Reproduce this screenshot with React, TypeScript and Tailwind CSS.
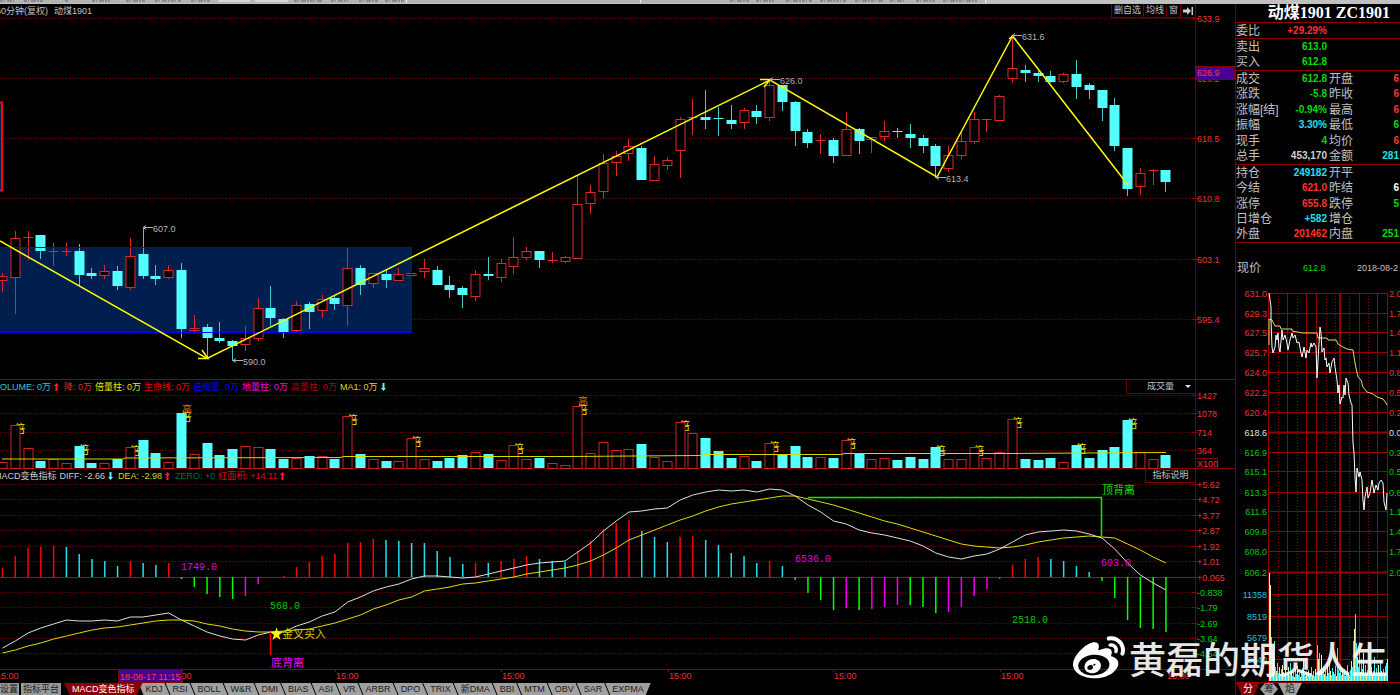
import React from 'react';
import { FaWeibo } from 'react-icons/fa';

type Candle = ['r' | 'c', number, number, number, number];
type Bar = [string, number];

// direction, high, body top, body bottom, low
const CANDLES: Candle[] = [
  ['r', 273, 276, 280, 292], ['r', 231, 238, 277, 314], ['r', 231, 237, 237, 260], ['c', 235, 235, 251, 259],
  ['r', 243, 251, 251, 266], ['r', 243, 251, 251, 256], ['c', 244, 251, 275, 287], ['c', 268, 273, 276, 279],
  ['r', 265, 271, 275, 279], ['c', 266, 271, 286, 290], ['r', 238, 256, 287, 290], ['c', 227, 254, 276, 279],
  ['c', 265, 276, 279, 285], ['r', 265, 270, 277, 279], ['c', 263, 270, 329, 338], ['r', 315, 328, 330, 334],
  ['c', 324, 327, 338, 358], ['c', 322, 338, 341, 343], ['c', 340, 341, 346, 361], ['r', 326, 338, 344, 351],
  ['r', 298, 308, 338, 341], ['c', 286, 308, 318, 326], ['c', 318, 319, 332, 338], ['r', 301, 305, 330, 333],
  ['c', 302, 304, 312, 329], ['r', 295, 299, 310, 318], ['c', 296, 298, 304, 310], ['r', 248, 268, 305, 326],
  ['c', 265, 268, 285, 295], ['r', 273, 273, 283, 288], ['c', 269, 274, 280, 288], ['r', 268, 274, 280, 280],
  ['r', 273, 273, 275, 275], ['r', 259, 268, 271, 278], ['c', 266, 270, 285, 285], ['c', 276, 285, 290, 298],
  ['c', 286, 288, 295, 308], ['r', 270, 274, 296, 301], ['c', 257, 274, 276, 280], ['r', 259, 263, 277, 282],
  ['r', 237, 257, 266, 274], ['r', 247, 251, 257, 260], ['c', 251, 251, 260, 268], ['r', 252, 260, 260, 263],
  ['r', 256, 257, 261, 263], ['r', 175, 204, 258, 259], ['r', 185, 192, 203, 214], ['r', 154, 163, 191, 198],
  ['r', 151, 156, 162, 176], ['r', 139, 146, 153, 161], ['c', 146, 148, 180, 180], ['r', 156, 164, 180, 180],
  ['r', 157, 160, 165, 170], ['r', 117, 119, 150, 178], ['r', 99, 117, 117, 135], ['c', 90, 117, 120, 129],
  ['c', 107, 118, 119, 136], ['c', 105, 120, 124, 129], ['r', 108, 110, 122, 129], ['c', 105, 111, 117, 124],
  ['r', 80, 85, 117, 121], ['c', 85, 85, 102, 111], ['c', 101, 102, 131, 146], ['c', 129, 132, 143, 148],
  ['r', 134, 140, 140, 154], ['c', 138, 140, 156, 163], ['r', 112, 129, 155, 155], ['c', 128, 129, 141, 154],
  ['r', 137, 137, 139, 153], ['r', 121, 131, 136, 141], ['c', 128, 131, 132, 138], ['c', 124, 134, 138, 148],
  ['c', 135, 138, 146, 153], ['c', 144, 146, 166, 178], ['r', 146, 155, 168, 172], ['r', 130, 141, 155, 159],
  ['r', 112, 119, 141, 144], ['r', 119, 119, 119, 132], ['r', 95, 96, 120, 120], ['r', 35, 68, 78, 83],
  ['c', 65, 70, 73, 82], ['c', 71, 73, 76, 82], ['c', 71, 76, 82, 83], ['r', 73, 74, 81, 83],
  ['c', 60, 74, 87, 99], ['c', 83, 85, 90, 99], ['c', 90, 90, 108, 121], ['c', 98, 105, 146, 151],
  ['c', 148, 148, 189, 196], ['r', 168, 173, 186, 195], ['r', 169, 170, 170, 185], ['c', 170, 170, 182, 192],
];

const VOLUMES = [
  462, 425, 448, 461, 459, 463, 446, 463, 463, 459, 447, 440, 453, 462, 413, 454, 443, 455, 449, 446, 447, 449, 459,
  458, 456, 456, 459, 416, 454, 459, 461, 461, 438, 459, 461, 458, 455, 452, 454, 460, 445, 459, 458, 463, 465, 406,
  453, 442, 450, 449, 444, 457, 461, 422, 433, 438, 451, 458, 456, 461, 443, 454, 446, 457, 457, 458, 440, 453, 459,
  458, 460, 457, 459, 447, 459, 459, 447, 458, 452, 419, 459, 460, 458, 462, 445, 458, 450, 447, 420, 452, 459, 455,
];

const DOUBLED = [1, 6, 10, 14, 27, 32, 40, 45, 53, 60, 66, 73, 76, 79, 84, 88];

const MACD: Bar[] = [
  ['r', 568], ['r', 556], ['r', 548], ['r', 547], ['r', 546], ['c', 547], ['c', 554], ['c', 559], ['c', 561], ['c', 566],
  ['r', 561], ['c', 563], ['c', 565], ['r', 563], ['g', 579], ['g', 587], ['g', 594], ['g', 597], ['g', 599], ['m', 596],
  ['m', 584], ['g', 577], ['r', 576], ['r', 567], ['r', 562], ['r', 556], ['r', 554], ['r', 543], ['r', 542], ['r', 539],
  ['c', 540], ['c', 541], ['c', 543], ['c', 543], ['c', 551], ['c', 557], ['c', 564], ['r', 563], ['c', 563], ['r', 561],
  ['r', 559], ['r', 556], ['c', 559], ['c', 561], ['c', 562], ['r', 551], ['r', 541], ['r', 529], ['r', 523], ['r', 520],
  ['c', 531], ['c', 537], ['c', 542], ['r', 537], ['r', 536], ['c', 540], ['c', 545], ['c', 553], ['c', 556], ['c', 563],
  ['r', 561], ['c', 566], ['g', 580], ['g', 593], ['g', 600], ['g', 610], ['m', 608], ['g', 610], ['m', 609], ['m', 607],
  ['m', 605], ['g', 605], ['g', 607], ['g', 613], ['m', 612], ['m', 607], ['m', 596], ['m', 589], ['m', 579], ['r', 565],
  ['r', 559], ['r', 557], ['c', 559], ['c', 561], ['c', 566], ['c', 572], ['g', 581], ['g', 598], ['g', 620], ['g', 628],
  ['g', 629], ['g', 632],
];

const DIFF = [
  648, 641, 633, 628, 624, 620, 621, 621, 620, 621, 617, 617, 615, 613, 620, 626, 632, 636, 639, 640, 635, 632, 632,
  626, 622, 616, 612, 602, 597, 591, 587, 584, 579, 576, 576, 577, 578, 577, 574, 571, 568, 565, 563, 562, 561, 552,
  543, 531, 521, 512, 511, 509, 508, 500, 495, 492, 490, 491, 490, 492, 489, 490, 496, 505, 512, 521, 524, 530, 533,
  535, 538, 541, 546, 553, 557, 559, 556, 554, 549, 542, 535, 532, 531, 530, 531, 534, 538, 549, 563, 575, 583, 590,
];

const DEA = [
  653, 650, 646, 643, 639, 636, 633, 630, 628, 627, 625, 623, 621, 620, 620, 621, 624, 626, 629, 631, 632, 632, 631,
  630, 629, 626, 623, 619, 615, 609, 605, 600, 597, 591, 589, 587, 584, 583, 581, 579, 577, 574, 572, 570, 568, 565,
  561, 555, 548, 540, 535, 530, 525, 520, 516, 511, 507, 504, 502, 500, 498, 496, 496, 499, 502, 505, 509, 513, 517,
  521, 524, 528, 532, 536, 540, 544, 546, 547, 548, 547, 545, 542, 540, 538, 537, 536, 537, 538, 544, 550, 557, 563,
];

const PRICE_AXIS: [number, string][] = [[18, '633.9'], [78, '626.2'], [138, '618.5'], [198, '610.8'], [259, '603.1'], [319, '595.4']];
const VOLUME_AXIS: [number, string][] = [[395, '1427'], [413, '1078'], [432, '714'], [450, '364']];
const MACD_AXIS: [number, string][] = [
  [484, '+5.62'], [499, '+4.72'], [515, '+3.77'], [530, '+2.87'], [546, '+1.92'], [561, '+1.01'], [577, '+0.065'],
  [592, '-0.838'], [607, '-1.79'], [623, '-2.69'], [638, '-3.64'], [653, '-4.54'],
];

const COLORS: Record<string, string> = { r: '#ff0000', c: '#22e0ee', g: '#00ff00', m: '#ee00ee' };

const xAt = (i: number) => 2.5 + i * 12.785;
const linePoints = (values: number[]) => values.map((y, i) => `${xAt(i)},${y}`).join(' ');

const Grid: React.FC<{ axis: [number, string][]; top: number; bottom: number }> = ({ axis, top, bottom }) => (
  <>
    {axis.map(([y, label]) => (
      <g key={label}>
        <line x1="0" x2="1195" y1={y + 0.5} y2={y + 0.5} stroke="#7a0000" strokeDasharray="1 1.5" />
        <line x1="1192" x2="1198" y1={y + 0.5} y2={y + 0.5} stroke="#8b0000" />
        <text x="1197" y={y + 4} fontSize="9" fill={label.startsWith('-') ? '#00d000' : '#f03434'}>{label}</text>
      </g>
    ))}
    <line x1="1195.5" x2="1195.5" y1={top} y2={bottom} stroke="#700000" />
  </>
);

const CallOut: React.FC<{ x: number; y: number; label: string }> = ({ x, y, label }) => (
  <g stroke="#b0b0b0" fill="none">
    <path d={`M${x + 10} ${y}H${x}M${x + 3} ${y - 2}L${x} ${y}L${x + 3} ${y + 2}`} />
    <text x={x + 10} y={y + 4} fontSize="9" fill="#b4b4b4" stroke="none">{label}</text>
  </g>
);

const PriceChart: React.FC = () => (
  <svg viewBox="0 18 1235 361" className="block w-full h-auto overflow-visible" role="img" aria-label="动煤1901">
    <Grid axis={PRICE_AXIS} top={18} bottom={379} />
    <rect x="-5" y="247" width="417" height="86" fill="#001f4f" />
    <rect x="-5" y="102.5" width="7" height="88" fill="#001f4f" stroke="#ff0000" strokeWidth="2" />
    {CANDLES.map(([dir, high, top, bottom, low], i) => {
      const x = Math.round(xAt(i) - 0.5) + 0.5;
      if (dir === 'c') {
        return (
          <g key={i}>
            <line x1={x} x2={x} y1={high} y2={low} stroke="#46c8c8" />
            <rect x={x - 5} y={top} width="10" height={bottom - top} fill="#54ffff" />
          </g>
        );
      }
      return (
        <g key={i} stroke="#dc2828">
          <line x1={x} x2={x} y1={high} y2={top} />
          <line x1={x} x2={x} y1={bottom} y2={low} />
          {top === bottom
            ? <line x1={x - 5} x2={x + 5} y1={top + 0.5} y2={top + 0.5} />
            : <rect x={x - 4.5} y={top + 0.5} width="9" height={bottom - top} fill="#000" />}
        </g>
      );
    })}
    <rect x="-5" y="247.5" width="416.5" height="85" fill="none" stroke="#0000ff" />
    <g fill="none" stroke="#ffff00" strokeWidth="1.5">
      <path d="M0 241L207 358.5L770 80L937 177L1012.5 36L1128 185" />
      <path d="M198 358.5H208L202 350M760 79.500H770L764 87M1009 39L1012.500 36L1016 40" />
    </g>
    <CallOut x={143} y={227.5} label="607.0" />
    <CallOut x={233} y={360.5} label="590.0" />
    <CallOut x={770} y={79.5} label="626.0" />
    <CallOut x={936} y={177.5} label="613.4" />
    <CallOut x={1012} y={35.5} label="631.6" />
    <rect x="1195.5" y="66.5" width="39" height="13" fill="#480090" stroke="#800000" />
    <text x="1197" y="76" fontSize="9" fill="#ff3c50">626.9</text>
  </svg>
);

const VolumeChart: React.FC = () => (
  <svg viewBox="0 394 1235 74" className="block w-full h-auto overflow-visible" role="img" aria-label="成交量">
    <Grid axis={VOLUME_AXIS} top={394} bottom={468} />
    {DOUBLED.map((i) => (
      <text key={i} x={xAt(i) - 1} y={VOLUMES[i] + 8} fontSize="11" fill="#e8e800">倍</text>
    ))}
    <text x="182" y="413" fontSize="10" fill="#e07000">高</text>
    <text x="578" y="405" fontSize="10" fill="#e07000">高</text>
    {VOLUMES.map((y, i) => {
      const x = Math.round(xAt(i) - 0.5) + 0.5;
      return CANDLES[i][0] === 'c'
        ? <rect key={i} x={x - 5} y={y} width="10" height={468 - y} fill="#54ffff" />
        : <rect key={i} x={x - 4.5} y={y + 0.5} width="9" height={468 - y} fill="#000" stroke="#c82424" />;
    })}
    <polyline
      points="2,459 123,459 125,458 340,457.500 344,456.500 570,456.500 700,455.500 705,454.500 840,454.500 845,453.500 1005,453.500 1166,452.500"
      fill="none" stroke="#d8d800"
    />
    <rect x="1195.5" y="458.5" width="22" height="10" fill="none" stroke="#800000" />
    <text x="1197" y="467" fontSize="9" fill="#f03434">X100</text>
  </svg>
);

const MacdChart: React.FC = () => (
  <svg viewBox="0 483 1235 186" className="block w-full h-auto overflow-visible" role="img" aria-label="MACD变色指标">
    <Grid axis={MACD_AXIS} top={483} bottom={669} />
    <line x1="0" x2="1195" y1="577.500" y2="577.500" stroke="#005a32" />
    {MACD.map(([c, y], i) => (
      <line key={i} x1={xAt(i)} x2={xAt(i)} y1="577" y2={y} stroke={COLORS[c]} strokeWidth="1.5" />
    ))}
    <polyline points={linePoints(DEA)} fill="none" stroke="#e0e000" />
    <polyline points={linePoints(DIFF)} fill="none" stroke="#e0e0e0" />
    <path d="M808 497.500H1101.500V536" fill="none" stroke="#00f000" strokeWidth="1.5" />
    <text x="1102" y="494" fontSize="11" fill="#00e000">顶背离</text>
    <g className="font-['Liberation_Mono',monospace]" fontSize="10">
      <text x="181" y="570" fill="#e000e0">1749.0</text>
      <text x="270" y="609" fill="#00c800">568.0</text>
      <text x="795" y="562" fill="#e000e0">6536.0</text>
      <text x="1101" y="566" fill="#e000e0">603.0</text>
      <text x="1012" y="623" fill="#00c800">2518.0</text>
    </g>
    <line x1="270.500" x2="270.500" y1="632" y2="655" stroke="#ff0000" strokeWidth="1.5" />
    <path d="M276.500 627.500L278 632H282.500L279 635L280.500 640L276.500 637L272.500 640L274 635L270.500 632H275Z" fill="#ffff00" />
    <text x="282" y="638" fontSize="11" fill="#d0d000">金叉买入</text>
    <text x="271" y="667" fontSize="11" fill="#f000f0">底背离</text>
  </svg>
);

const TIMES = [-4, 169, 336, 502, 669, 834, 1001, 1167];

const TimeAxis: React.FC = () => (
  <svg viewBox="0 669 1235 14" className="block w-full h-auto" role="img" aria-label="时间">
    <line x1="0" x2="1235" y1="669.500" y2="669.500" stroke="#8b0000" />
    {TIMES.map((x) => (
      <g key={x}>
        <line x1={x - 0.5} x2={x - 0.5} y1="669" y2="672" stroke="#8b0000" />
        <text x={x} y="679" fontSize="9" fill="#f03030">15:00</text>
      </g>
    ))}
    <rect x="118.500" y="669.500" width="64" height="13" fill="#480090" stroke="#800000" />
    <text x="120" y="680" fontSize="9" fill="#ff3c50">18-08-17 11:15</text>
  </svg>
);

const Arrow: React.FC<{ up?: boolean }> = ({ up }) => (
  <svg viewBox="0 0 5 8" className={up ? 'w-[5px] h-2 fill-[#ff2020]' : 'w-[5px] h-2 fill-[#54ffff] rotate-180'} aria-hidden="true">
    <path d="M2.500 0L5 3H3.500V8H1.500V3H0Z" />
  </svg>
);

const INDICATORS = [
  'KDJ', 'RSI', 'BOLL', 'W&R', 'DMI', 'BIAS', 'ASI', 'VR', 'ARBR', 'DPO', 'TRIX', '新DMA', 'BBI', 'MTM', 'OBV', 'SAR', 'EXPMA',
];

interface QuoteRow {
  tall?: boolean;
  line?: boolean;
  cells: [string, string, string, string?, string?, string?];
}

const RED = 'text-[#ff3232]';
const GREEN = 'text-[#00dc00]';
const CYAN = 'text-[#20e0f0]';

const QUOTES: QuoteRow[] = [
  { tall: true, line: true, cells: ['委比', '+29.29%', RED] },
  { tall: true, line: true, cells: ['卖出', '613.0', GREEN] },
  { tall: true, cells: ['买入', '612.8', GREEN] },
  { tall: true, line: true, cells: ['成交', '612.8', GREEN, '开盘', '6', RED] },
  { cells: ['涨跌', '-5.8', GREEN, '昨收', '6', RED] },
  { tall: true, cells: ['涨幅[结]', '-0.94%', GREEN, '最高', '6', RED] },
  { cells: ['振幅', '3.30%', CYAN, '最低', '6', GREEN] },
  { tall: true, cells: ['现手', '4', GREEN, '均价', '6', RED] },
  { tall: true, cells: ['总手', '453,170', 'text-[#d0d0d0]', '金额', '281', CYAN] },
  { tall: true, line: true, cells: ['持仓', '249182', CYAN, '开平', '', RED] },
  { cells: ['今结', '621.0', RED, '昨结', '6', 'text-white'] },
  { tall: true, cells: ['涨停', '655.8', RED, '跌停', '5', GREEN] },
  { cells: ['日增仓', '+582', CYAN, '增仓', '', RED] },
  { tall: true, cells: ['外盘', '201462', RED, '内盘', '251', GREEN] },
];

const QuoteTable: React.FC = () => (
  <table className="w-full table-fixed border-collapse border-b border-[#8b0000] leading-none whitespace-nowrap">
    <colgroup>
      <col className="w-[43px]" />
      <col className="w-[48px]" />
      <col className="w-[26px]" />
      <col />
    </colgroup>
    <tbody>
      {QUOTES.map(({ tall, line, cells }) => (
        <tr key={cells[0]} className={`${tall ? 'h-4' : 'h-[15px]'} ${line ? 'border-t border-[#8b0000]' : ''}`}>
          <th scope="row" className="p-0 text-left text-[12px] font-normal text-[#c0c0c0]">{cells[0]}</th>
          <td className={`p-0 text-right text-[10px] font-bold ${cells[2]}`}>{cells[1]}</td>
          <td className="p-0 pl-0.5 text-[12px] text-[#c0c0c0]">{cells[3]}</td>
          <td className={`p-0 pr-px text-right text-[10px] font-bold ${cells[5]}`}>{cells[4]}</td>
        </tr>
      ))}
    </tbody>
  </table>
);

const DAY_LEVELS: [number, string, string][] = [
  [293, '631.0', '2.0'], [313, '629.3', '1.7'], [332, '627.5', '1.4'], [352, '625.7', '1.1'], [372, '624.0', '0.8'],
  [392, '622.2', '0.5'], [412, '620.4', '0.2'], [432, '618.6', '0.0'], [452, '616.9', '0.2'], [471, '615.1', '0.5'],
  [492, '613.3', '0.8'], [511, '611.6', '1.1'], [531, '609.8', '1.4'], [551, '608.0', '1.7'], [572, '606.2', '2.0'],
];

const DAY_VOLUME: [number, string][] = [[594, '11358'], [616, '8519'], [637, '5679'], [659, '2840']];

// traded volume per slot, one pixel wide each
const TICKS = [
  108, 96, 44, 30, 22, 40, 14, 10, 18, 8, 14, 6, 12, 16, 9, 6, 11, 5, 8, 14, 6, 18, 10, 5, 9, 4, 12, 7, 15, 6, 8, 4, 10, 13,
  20, 7, 5, 9, 6, 11, 4, 8, 14, 6, 10, 5, 12, 7, 36, 22, 28, 12, 26, 9, 15, 7, 11, 5, 18, 8, 24, 10, 6, 13, 9, 7, 15, 5, 33,
  11, 8, 14, 6, 10, 7, 12, 5, 9, 16, 8, 6, 11, 20, 14, 40, 52, 67, 38, 24, 14, 33, 9, 22, 12, 28, 8, 16, 7, 11, 5, 20, 9, 14,
  6, 10, 24, 7, 13, 5, 16, 8, 20, 10, 6, 12, 8, 15, 18, 22,
];

const DayChart: React.FC = () => (
  <svg viewBox="1236 276 164 407" className="block w-full h-auto" role="img" aria-label="分时走势">
    <g fill="none" stroke="#960000">
      {[1268.5, 1287.5, 1306.5, 1316.5, 1359.5, 1377.5, 1387.5].map((x) => <line key={x} x1={x} x2={x} y1="293" y2="681" />)}
      <line x1="1340" x2="1340" y1="293" y2="681" strokeWidth="2" />
      {[1278.5, 1297.5, 1326.5, 1335.5, 1349.5, 1368.5].map((x) => (
        <line key={x} x1={x} x2={x} y1="293" y2="681" strokeDasharray="1 2" />
      ))}
      {DAY_LEVELS.map(([y]) => (
        <line key={y} x1="1268" x2="1388" y1={y + 0.5} y2={y + 0.5} strokeWidth={y === 432 || y === 572 ? 2 : 1} />
      ))}
      {DAY_VOLUME.map(([y]) => <line key={y} x1="1268" x2="1388" y1={y + 0.5} y2={y + 0.5} />)}
      <line x1="1235" x2="1400" y1="682.500" y2="682.500" />
    </g>
    <g fontSize="9">
      {DAY_LEVELS.map(([y, price, pct]) => {
        const fill = y === 432 ? '#e0e0e0' : y < 432 ? '#f03030' : '#00c800';
        return (
          <g key={y} fill={fill}>
            <text x="1267" y={y + 4} textAnchor="end">{price}</text>
            <text x="1389" y={y + 4}>{pct}</text>
          </g>
        );
      })}
      {DAY_VOLUME.map(([y, label]) => (
        <text key={y} x="1267" y={y + 4} textAnchor="end" fill="#18c8d8">{label}</text>
      ))}
    </g>
    {TICKS.map((h, i) => (
      <rect key={i} x={1269 + i} y={681 - h} width="1" height={h} fill={i < 2 || i % 3 === 1 ? '#f0f0a0' : '#40e8f0'} />
    ))}
    <polyline
      points="1269,345 1269,319 1272,320 1275,326 1280,326 1281,329 1292,329 1292,331 1303,333 1317,333 1318,338 1327,338 1328,340 1336,340 1338,344 1343,347 1347,349 1353,350 1354,357 1356,368 1358,377 1361,380 1363,387 1367,392 1373,394 1377,397 1383,399 1386,403 1387,405"
      fill="none" stroke="#dcdc64"
    />
    <polyline
      points="1269,293 1271,307 1271,320 1272,347 1273,353 1275,347 1276,335 1277,340 1278,333 1279,348 1280,352 1282,330 1283,340 1285,335 1287,343 1288,350 1290,340 1292,333 1293,338 1295,335 1297,343 1299,342 1301,353 1302,357 1304,347 1306,358 1307,350 1309,353 1311,343 1312,347 1314,343 1316,347 1317,378 1319,343 1320,327 1321,333 1322,352 1324,348 1325,360 1326,358 1327,367 1329,363 1330,373 1332,362 1334,358 1335,367 1337,380 1338,393 1339,385 1340,404 1342,397 1343,398 1344,385 1345,395 1346,378 1348,383 1349,395 1351,403 1352,405 1353,443 1354,453 1355,477 1356,492 1357,468 1359,477 1360,472 1362,480 1363,500 1364,510 1365,497 1367,487 1368,498 1370,493 1372,480 1374,493 1376,485 1378,490 1379,483 1381,480 1383,483 1384,502 1386,510 1387,493"
      fill="none" stroke="#ffffff"
    />
  </svg>
);

const Toolbar: React.FC = () => (
  <div className="h-1 overflow-hidden bg-[#c0c0c0]">
    <svg viewBox="0 0 1400 4" className="block w-full h-auto" aria-hidden="true">
      <rect width="985" height="3" fill="#b4b4b4" />
      <path d="M218 1h32M255 1h33" stroke="#d8d8d8" strokeWidth="2" />
      <path
        d="M0 1h14M24 1h20M65 1h3M92 1h18M126 1h19M155 1h26M191 1h19M294 1h28M331 1h17M359 1h19M385 1h19M730 1h20M756 1h18M786 1h26M820 1h26M855 1h28M890 1h14M916 1h20M943 1h34"
        stroke="#606060" strokeDasharray="3 1 1 2 5 1 2 1"
      />
      <path d="M406.500 0V3M640.500 0V3M985.500 0V3" stroke="#f0f0f0" />
    </svg>
  </div>
);

const App: React.FC = () => {
  return (
    <div className="relative min-h-screen overflow-hidden bg-black font-['Liberation_Sans','Noto_Sans_CJK_SC',sans-serif] text-[#c0c0c0]">
      <Toolbar />

      <div className="flex">
        {/* Charts */}
        <main className="min-w-0 flex-1 text-[9px] leading-none whitespace-nowrap">
          <header className="flex h-[14px]">
            <div className="flex flex-1 items-center gap-1.5">
              <h1 className="-ml-1">60分钟(复权)</h1>
              <span>动煤1901</span>
            </div>
            <div className="flex border-b border-l border-[#700000] divide-x divide-[#700000]">
              <button type="button" className="px-0.5">删自选</button>
              <button type="button" className="px-0.5">均线</button>
              <button type="button" className="px-0.5">窗</button>
              <button type="button" aria-label="最新" className="px-0.5">
                <svg viewBox="0 0 10 8" className="block w-[10px] h-2 fill-[#d0d0d0]" aria-hidden="true">
                  <path d="M0 2.500H4V0L8 4L4 8V5.500H0ZM8.500 0H10V8H8.500Z" />
                </svg>
              </button>
            </div>
            <div className="w-10 border-l border-[#700000]" />
          </header>
          <PriceChart />

          <div className="flex h-[15px] border-t border-[#8b0000]">
            <div className="flex flex-1 items-center gap-[3px]">
              <span className="-ml-1.5 text-[#30c8c8]">VOLUME: 0万</span>
              <Arrow up />
              <span className="pl-0.5 text-[#d83030]">降: 0万</span>
              <span className="text-[#e8e800]">倍量柱: 0万</span>
              <span className="text-[#e80000]">生命线: 0万</span>
              <span className="text-[#0000ff]">倍缩量: 0万</span>
              <span className="text-[#f000f0]">地量柱: 0万</span>
              <span className="text-[#b00000]">高量柱: 0万</span>
              <span className="text-[#d8d820]">MA1: 0万</span>
              <Arrow />
            </div>
            <div className="relative w-[69px] border-b border-l border-[#700000]">
              <select aria-label="副图指标" className="h-full w-full appearance-none bg-black pl-5 text-[9px] leading-none">
                <option>成交量</option>
              </select>
              <svg viewBox="0 0 6 3" className="pointer-events-none absolute right-1 top-[5px] w-1.5 h-[3px] fill-[#e0e0e0]" aria-hidden="true">
                <path d="M0 0H6L3 3Z" />
              </svg>
            </div>
            <div className="w-10 border-l border-[#700000]" />
          </div>
          <VolumeChart />

          <div className="flex h-[15px] border-t border-[#8b0000]">
            <div className="flex flex-1 items-center gap-[3px]">
              <span className="-ml-1.5 text-[#d0d0d0]">MACD变色指标</span>
              <span className="text-[#d0d0d0]">DIFF: -2.66</span>
              <Arrow />
              <span className="pl-0.5 text-[#d8d820]">DEA: -2.98</span>
              <Arrow up />
              <span className="pl-0.5 text-[#007038]">ZERO: +0</span>
              <span className="text-[#e80000]">红面积: +14.11</span>
              <Arrow up />
            </div>
            <button type="button" className="w-[50px] border-b border-l border-[#700000]">指标说明</button>
            <div className="w-10 border-l border-[#700000]" />
          </div>
          <MacdChart />
          <TimeAxis />

          <nav className="flex h-3 items-stretch overflow-hidden text-[#202020]">
            <button type="button" className="-ml-px w-5 bg-[#989898]">设置</button>
            <button type="button" className="ml-0.5 px-0.5 bg-[#989898]">指标平台</button>
            <button type="button" className="relative z-10 ml-[3px] px-2 bg-[#8b0000] text-white [clip-path:polygon(0_0,100%_0,calc(100%_-_6px)_100%,6px_100%)]">
              MACD变色指标
            </button>
            {INDICATORS.map((name) => (
              <button
                key={name}
                type="button"
                className="-ml-1 px-[7px] bg-[#a0a0a0] last:[clip-path:polygon(0_0,100%_0,calc(100%_-_5px)_100%,5px_100%)] [clip-path:polygon(0_0,calc(100%_-_5px)_0,100%_100%,5px_100%)]"
              >
                {name}
              </button>
            ))}
          </nav>
        </main>

        {/* Quote panel */}
        <aside className="w-[165px] shrink-0 overflow-hidden border-l border-[#700000]">
          <h2 className="flex h-[18px] items-center justify-end pr-2.5 font-['Liberation_Serif','Noto_Sans_CJK_SC',serif] text-base leading-none font-bold whitespace-nowrap text-white">
            动煤1901 ZC1901
          </h2>
          <QuoteTable />
          <div className="flex h-[33px] items-end pb-0.5 pl-px leading-none whitespace-nowrap">
            <span className="w-[66px] text-[12px]">现价</span>
            <span className="w-[54px] pb-px text-[9px] text-[#00dc00]">612.8</span>
            <span className="pb-px text-[9px]">2018-08-2</span>
          </div>
          <DayChart />
          <nav className="flex h-3 text-[10px] leading-none text-[#202020]">
            <button type="button" className="w-6 bg-[#8b0000] text-white [clip-path:polygon(0_0,100%_0,calc(100%_-_6px)_100%,6px_100%)]">分</button>
            <button type="button" className="w-[18px] bg-[#a0a0a0] [clip-path:polygon(5px_0,13px_0,100%_50%,13px_100%,5px_100%,0_50%)]">筹</button>
            <button type="button" className="w-6 bg-[#a0a0a0] [clip-path:polygon(0_0,100%_0,calc(100%_-_6px)_100%,6px_100%)]">焰</button>
          </nav>
        </aside>
      </div>

      {/* Watermark */}
      <div className="pointer-events-none absolute right-3 bottom-2.5 flex items-center gap-1 text-white/90">
        <FaWeibo className="size-[52px] text-white" aria-hidden="true" />
        <span className="pt-1 text-[37px] leading-none font-medium whitespace-nowrap">黄磊的期货人生</span>
      </div>
    </div>
  );
};

export default App;
